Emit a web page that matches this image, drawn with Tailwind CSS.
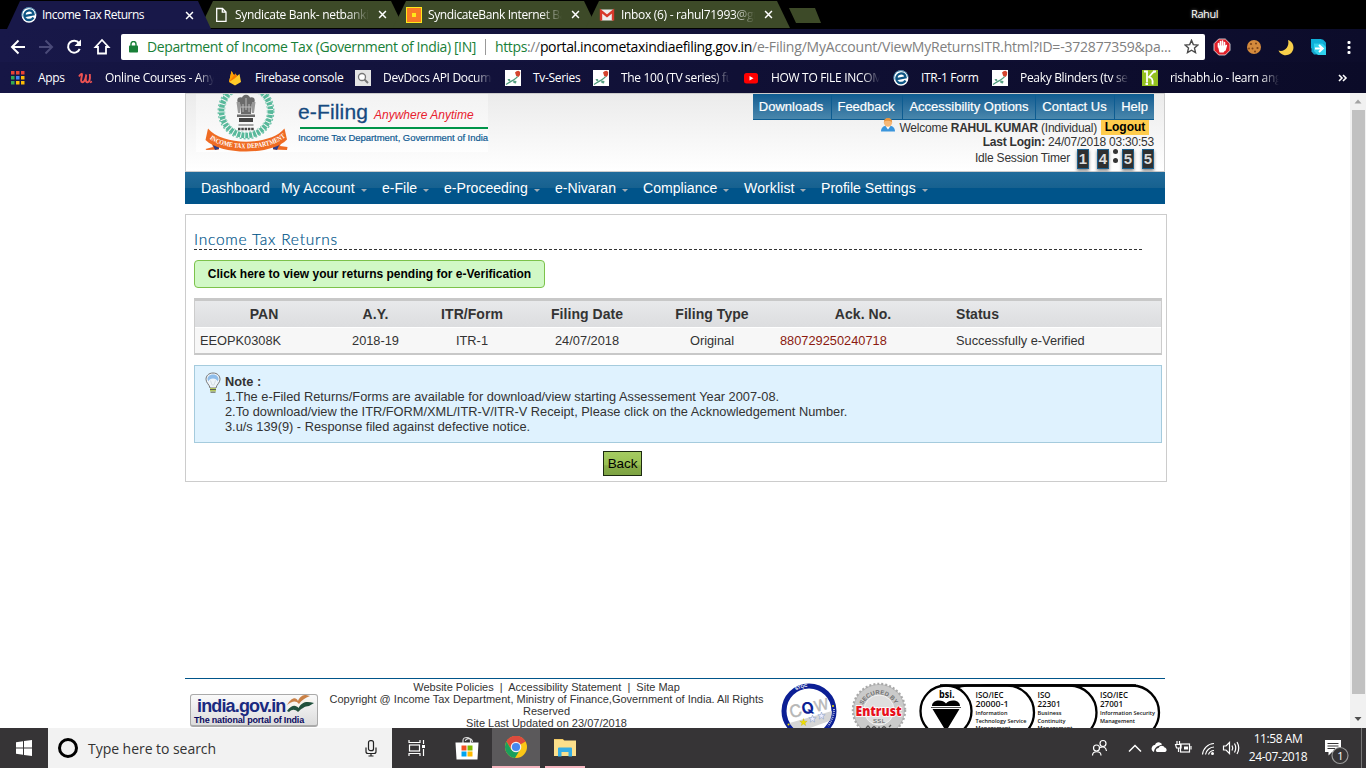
<!DOCTYPE html>
<html lang="en">
<head>
<meta charset="utf-8">
<title>Income Tax Returns</title>
<script src="https://cdn.jsdelivr.net/npm/@tailwindcss/browser@4"></script>
</head>
<body class="w-[1366px] h-[768px] overflow-hidden bg-white flex flex-col font-['Liberation_Sans',sans-serif] text-[#333]">

<svg class="hidden">
  <symbol id="e-logo" viewBox="0 0 16 16">
    <ellipse cx="8" cy="8" rx="7.4" ry="7.8" fill="#fff"/>
    <path d="M3.4 9.2L12.6 7.3C12.2 4.6 10.4 3.2 8 3.3C5.2 3.5 3.2 6 3.4 9C3.6 11.7 5.7 13.2 8.1 13C10.2 12.9 11.7 11.9 12.4 10.4" fill="none" stroke="#0d5584" stroke-width="2.3"/>
    <path d="M1 9.5C0 4 3.4.8 7.6.7C11 .7 14.5 2.6 15.2 7" fill="none" stroke="#2b6f9c" stroke-width="1"/>
  </symbol>
  <symbol id="rose" viewBox="0 0 16 16">
    <rect width="16" height="16" fill="#fff"/>
    <path d="M10 2.5L11.500 1.2L13.500 .8L15.200 2L15 5L13.500 7L11.200 6z" fill="#d4452f"/>
    <path d="M12.500 6.500C11.500 9 6 11 1 14.500" fill="none" stroke="#4d9a7a" stroke-width="1.200"/>
    <path d="M5.500 11.500L5 9L2.500 9L3.500 11zM8 10.500L11.500 11L11 13.500L8.500 13z" fill="#5aa284"/>
  </symbol>
  <symbol id="x" viewBox="0 0 10 10"><path d="M1.2 1.2L8.8 8.8M8.8 1.2L1.2 8.8" stroke="#fff" stroke-width="1.7"/></symbol>
</svg>

<!-- Tab strip -->
<div class="h-[29px] shrink-0 bg-black flex pl-[7px] pt-px font-['Open_Sans',sans-serif] text-[12px] text-white">
  <div class="relative z-10 w-[204px] h-7 bg-[#181849] [clip-path:polygon(13px_0,191px_0,204px_100%,0_100%)] flex items-center pl-[14px]">
    <svg class="w-4 h-4 shrink-0"><use href="#e-logo"/></svg>
    <span class="ml-[5px] w-[140px] whitespace-nowrap tracking-[-0.5px]">Income Tax Returns</span>
    <svg class="w-[9px] h-[9px] ml-[3px]"><use href="#x"/></svg>
  </div>
  <div class="-ml-[11px] w-[204px] h-[27px] bg-[#3d4a28] [clip-path:polygon(13px_0,191px_0,204px_100%,0_100%)] flex items-center pl-[15px]">
    <svg class="w-4 h-4 shrink-0" viewBox="0 0 16 16"><path d="M1.7 1.5H7.5L11 5V14.3H1.7zM7.3 1.5V5.2H11" fill="none" stroke="#fff" stroke-width="1.3"/></svg>
    <span class="ml-1 w-[134px] overflow-hidden whitespace-nowrap tracking-[-0.300px] [mask-image:linear-gradient(to_right,#000_84%,transparent)]">Syndicate Bank- netbankin</span>
    <svg class="w-[9px] h-[9px] ml-[9px]"><use href="#x"/></svg>
  </div>
  <div class="-ml-[11px] w-[204px] h-[27px] bg-[#3d4a28] [clip-path:polygon(13px_0,191px_0,204px_100%,0_100%)] flex items-center pl-[13px]">
    <svg class="w-4 h-4 shrink-0" viewBox="0 0 16 16"><rect x=".5" y=".5" width="15" height="15" fill="#f97a26" stroke="#ffe81a"/><rect x="6" y="6" width="4" height="4" fill="#ffe81a"/></svg>
    <span class="ml-[6px] w-[134px] overflow-hidden whitespace-nowrap tracking-[-0.38px] [mask-image:linear-gradient(to_right,#000_84%,transparent)]">SyndicateBank Internet Ban</span>
    <svg class="w-[9px] h-[9px] ml-[9px]"><use href="#x"/></svg>
  </div>
  <div class="-ml-[11px] w-[204px] h-[27px] bg-[#3d4a28] [clip-path:polygon(13px_0,191px_0,204px_100%,0_100%)] flex items-center pl-[13px]">
    <svg class="w-4 h-4 shrink-0" viewBox="0 0 16 16"><rect x="1.5" y="2.5" width="13" height="11" rx="1" fill="#eee"/><path d="M2 13.5V4L8 9L14 4V13.5" fill="none" stroke="#d8392b" stroke-width="2.4"/></svg>
    <span class="ml-[6px] w-[134px] overflow-hidden whitespace-nowrap tracking-[-0.31px] [mask-image:linear-gradient(to_right,#000_84%,transparent)]">Inbox (6) - rahul71993@gm</span>
    <svg class="w-[9px] h-[9px] ml-[9px]"><use href="#x"/></svg>
  </div>
  <div class="-ml-px mt-[7px] w-8 h-[15px] bg-[#3d4a28] [clip-path:polygon(0_0,26px_0,100%_100%,7px_100%)]"></div>
  <div class="ml-[370px] pt-[5px] text-[11px] tracking-[-0.4px] [text-shadow:0_0_3px_#888]">Rahul</div>
</div>

<!-- Toolbar -->
<div class="h-[33px] shrink-0 flex items-center bg-linear-to-r from-[#181849] to-[#0c0c2a] font-['Open_Sans',sans-serif] text-[14px]">
  <svg class="w-[121px] h-[33px] shrink-0" viewBox="0 0 121 33" fill="none" stroke="#fff" stroke-width="2">
    <path d="M25 18H12.5M18.5 11.5L12 18L18.5 24.5"/>
    <path d="M39 18H51.500M45.500 11.500L52 18L45.500 24.500" stroke="#4a4a78"/>
    <path d="M79 14.200A6 6 0 1 0 79.700 19.800"/><path d="M81 10.500V17H74.500z" fill="#fff" stroke="none"/>
    <path d="M95.500 18L102 11L108.500 18H106V24.500H98V18z" stroke-width="1.800"/>
  </svg>
  <div class="w-[1084px] h-[26px] mt-[2px] rounded-[2px] bg-white flex items-center shrink-0">
    <svg class="ml-[8px] w-[9px] h-3" viewBox="0 0 9 12"><rect y="4.500" width="9" height="7" rx=".8" fill="#188038"/><path d="M2 5V3A2.500 2.500 0 0 1 7 3V5" fill="none" stroke="#188038" stroke-width="1.400"/></svg>
    <span class="ml-[9px] w-[338px] whitespace-nowrap tracking-[-0.39px] text-[#188038]">Department of Income Tax (Government of India) [IN]</span>
    <span class="w-px h-4 bg-[#999]"></span>
    <span class="ml-[9px] w-[257px] whitespace-nowrap tracking-[-0.36px] text-black"><span class="text-[#188038]">https</span><span class="text-[#808080]">://</span>portal.incometaxindiaefiling.gov.in</span>
    <span class="w-[420px] whitespace-nowrap tracking-[-0.21px] text-[#808080]">/e-Filing/MyAccount/ViewMyReturnsITR.html?ID=-372877359&amp;pa...</span>
    <svg class="ml-[12px] w-[15px] h-[15px]" viewBox="0 0 15 15"><path d="M7.500 1.300L9.300 5.600L14 6L10.500 9.100L11.500 13.600L7.500 11.200L3.500 13.600L4.500 9.100L1 6L5.700 5.600z" fill="none" stroke="#4a4a4a" stroke-width="1.400"/></svg>
  </div>
  <svg class="w-[161px] h-[33px] shrink-0" viewBox="1205 29 161 33">
    <path d="M1218.700 39H1225.300L1230 43.700V50.300L1225.300 55H1218.700L1214 50.300V43.700z" fill="#e01e28" stroke="#eee" stroke-width=".8"/>
    <path d="M1218.500 47V43.500M1220.500 47V41.500M1222.500 47V41M1224.500 47V42.500M1226.300 45.500L1225 50" stroke="#fff" stroke-width="1.600" stroke-linecap="round"/><path d="M1217.800 45.500H1225.500L1225 50.500L1223.500 52.500H1219.500z" fill="#fff"/>
    <circle cx="1254" cy="47" r="7" fill="#d58a3c"/><g fill="#7c4318"><circle cx="1251" cy="44" r="1.100"/><circle cx="1256" cy="43.500" r="1"/><circle cx="1257.500" cy="48" r="1.100"/><circle cx="1252.500" cy="48.500" r="1"/><circle cx="1255" cy="51.500" r="1"/><circle cx="1249" cy="48.500" r=".9"/></g>
    <path d="M1288 40A7.800 7.800 0 1 1 1278.500 50.500C1284 52.500 1290 47 1288 40z" fill="#f8cf4a"/>
    <path d="M1311.500 39.500H1323L1326 42.500V54.500H1314L1311.500 51.500z" fill="#14a5cc"/><path d="M1311 39H1321L1325 43H1315V50L1311 48z" fill="#0fb0d8"/><path d="M1314 43.500H1322.500L1326 47V55H1318L1314 51z" fill="#2fd3ee"/><path d="M1315 48.500H1321.500M1319 45L1322.800 48.500L1319 52" fill="none" stroke="#fff" stroke-width="2"/>
    <g fill="#fff"><rect x="1347.500" y="41" width="3" height="3" rx="1"/><rect x="1347.500" y="46" width="3" height="3" rx="1"/><rect x="1347.500" y="51" width="3" height="3" rx="1"/></g>
  </svg>
</div>

<!-- Bookmarks bar -->
<div class="h-[31px] shrink-0 flex items-center pl-[10px] bg-linear-to-r from-[#161645] to-[#0b0b28] font-['Open_Sans',sans-serif] text-[12px] text-white whitespace-nowrap tracking-[-0.32px]">
  <div class="w-[67px] flex items-center gap-3"><svg class="w-4 h-4" viewBox="0 0 16 16"><g fill="#ea4335"><rect x="1" y="1" width="3.500" height="3.500"/><rect x="6" y="1" width="3.500" height="3.500"/><rect x="11" y="1" width="3.500" height="3.500"/></g><g><rect x="1" y="6" width="3.500" height="3.500" fill="#34a853"/><rect x="6" y="6" width="3.500" height="3.500" fill="#4285f4"/><rect x="11" y="6" width="3.500" height="3.500" fill="#fbbc05"/><rect x="1" y="11" width="3.500" height="3.500" fill="#34a853"/><rect x="6" y="11" width="3.500" height="3.500" fill="#fbbc05"/><rect x="11" y="11" width="3.500" height="3.500" fill="#fbbc05"/></g></svg><span>Apps</span></div>
  <div class="w-[150px] flex items-center gap-3"><svg class="w-4 h-4 shrink-0" viewBox="0 0 16 16"><path d="M2 6.500C3.500 4 5.300 2.800 5 5C4.700 7.500 3 12.300 5.300 12.300C7.500 12.300 8.800 8 9.300 4.500C8.600 8 8.300 12.700 10.500 12.300C12.800 11.800 13.300 8.500 12.800 4" fill="none" stroke="#ec5252" stroke-width="1.900"/><path d="M13 12.500L15 11.500" stroke="#ec5252" stroke-width="1.500"/></svg><span class="w-[109px] overflow-hidden [mask-image:linear-gradient(to_right,#000_84%,transparent)]">Online Courses - Anyti</span></div>
  <div class="w-[128px] flex items-center gap-3"><svg class="w-4 h-4" viewBox="0 0 16 16"><path d="M2 12L4.500 1L7 5.500L8.500 3.500L10 6L12.500 4L14 12L8 15.500z" fill="#ffca28"/><path d="M2 12L4.500 1L8.500 8z" fill="#ffa000"/><path d="M2 12L8.500 3.500L10.200 6.500z" fill="#f57c00"/></svg><span>Firebase console</span></div>
  <div class="w-[150px] flex items-center gap-3"><svg class="w-4 h-4 shrink-0" viewBox="0 0 16 16"><rect width="16" height="16" fill="#e4e4e4"/><circle cx="7" cy="7" r="3.500" fill="#fff" stroke="#777" stroke-width="1.300"/><path d="M9.500 9.500L13 13" stroke="#777" stroke-width="2"/></svg><span class="w-[109px] overflow-hidden [mask-image:linear-gradient(to_right,#000_84%,transparent)]">DevDocs API Docume</span></div>
  <div class="w-[88px] flex items-center gap-3"><svg class="w-4 h-4"><use href="#rose"/></svg><span>Tv-Series</span></div>
  <div class="w-[150px] flex items-center gap-3"><svg class="w-4 h-4 shrink-0"><use href="#rose"/></svg><span class="w-[109px] overflow-hidden [mask-image:linear-gradient(to_right,#000_84%,transparent)]">The 100 (TV series) full</span></div>
  <div class="w-[150px] flex items-center gap-3"><svg class="w-4 h-4 shrink-0" viewBox="0 0 16 16"><rect x="1" y="3" width="14" height="10.500" rx="2.500" fill="#f00"/><path d="M6.500 6V10.500L10.500 8.200z" fill="#fff"/></svg><span class="w-[109px] overflow-hidden [mask-image:linear-gradient(to_right,#000_84%,transparent)]">HOW TO FILE INCOME</span></div>
  <div class="w-[99px] flex items-center gap-3"><svg class="w-4 h-4"><use href="#e-logo"/></svg><span>ITR-1 Form</span></div>
  <div class="w-[150px] flex items-center gap-3"><svg class="w-4 h-4 shrink-0"><use href="#rose"/></svg><span class="w-[109px] overflow-hidden [mask-image:linear-gradient(to_right,#000_84%,transparent)]">Peaky Blinders (tv serie</span></div>
  <div class="w-[195px] flex items-center gap-3"><svg class="w-4 h-4 shrink-0" viewBox="0 0 16 16"><rect width="16" height="16" fill="#94c11f"/><path d="M2 1.500H5V12.500M3.500 14H6M13 1.500C10 2 9 5.500 6.500 7.500C9 7 11.500 9 10.500 14.500M11 1.500H14" fill="none" stroke="#fff" stroke-width="1.800"/></svg><span class="w-[109px] overflow-hidden [mask-image:linear-gradient(to_right,#000_84%,transparent)]">rishabh.io - learn angul</span></div>
  <svg class="w-[10px] h-[8px] ml-px" viewBox="0 0 10 8"><path d="M1 1L4 4L1 7M5 1L8 4L5 7" fill="none" stroke="#fff" stroke-width="1.600"/></svg>
</div>

<!-- Page viewport -->
<div class="h-[635px] shrink-0 flex overflow-hidden">
<div class="w-[1350px] pl-[185px] flex flex-col">

  <!-- Site header -->
  <header class="w-[980px] h-[79px] shrink-0 border border-[#ccc] bg-linear-to-b from-[#ebebeb] to-white flex justify-between">
    <div class="w-[292px] h-[58px] ml-[10px] bg-linear-to-b from-[#f3f3f3] to-white/80 flex">
      <svg class="w-[102px] h-[60px] shrink-0 overflow-hidden" viewBox="196 94 102 60">
        <circle cx="246" cy="111" r="24.500" fill="none" stroke="#58b99b" stroke-width="5.500" stroke-dasharray="3 1"/>
        <circle cx="246" cy="111" r="27.800" fill="none" stroke="#6cc3a9" stroke-width="1.300" stroke-dasharray="2 2"/>
        <circle cx="246" cy="111" r="21.300" fill="none" stroke="#8fd2bd" stroke-width="1" stroke-dasharray="2 2"/>
        <g fill="#6b6b6b"><circle cx="246" cy="99" r="4.300"/><circle cx="240.500" cy="100.500" r="3.200"/><circle cx="251.500" cy="100.500" r="3.200"/><path d="M240 102H252L251 114H241z"/><path d="M236.500 102H240V113H238zM252 102H255.500L254 113H252z" fill="#999"/><rect x="237" y="114.500" width="18" height="2.500"/><rect x="239" y="118" width="14" height="4" fill="#444"/></g>
        <path d="M241 107H251M243 104V112M249 104V112M246 98V110" stroke="#bbb" stroke-width="1"/>
        <path d="M238.500 125H253.500" stroke="#555" stroke-width="1"/><path d="M238 129H254" stroke="#444" stroke-width="2.500" stroke-dasharray="2.500 .8"/>
        <path d="M205.500 149L213 147L208 134L217 139L219 149.500L206.500 150zM287.500 147L280 146L284.500 133.500L275 139L273 149.500L287 150z" fill="#ef6b23"/>
        <path d="M209 136L215 150L219 149V143zM283.500 136L277 150L273 149V143z" fill="#2c3c88"/>
        <path d="M208 128.500C222 146 270 146 284.500 128.500L287 139.500C272 155.500 221 155.500 205.500 140z" fill="#ef6b23"/>
        <path id="ribbon" d="M208 137.500C224 152 269 152 286 136.500" fill="none"/>
        <text font-family="Liberation Serif" font-weight="700" font-size="7" fill="#fff"><textPath href="#ribbon" textLength="80" lengthAdjust="spacingAndGlyphs" startOffset="2">INCOME TAX DEPARTMENT</textPath></text>
      </svg>
      <div class="w-[190px] pt-[7px] flex flex-col">
        <div class="h-[26px] flex items-baseline whitespace-nowrap"><span class="text-[21px] leading-[22px] w-[76px] tracking-[0.150px] text-[#164a80] [-webkit-text-stroke:0.3px_#164a80]">e-Filing</span><span class="text-[12px] italic text-[#e8202e]">Anywhere Anytime</span></div>
        <div class="ml-[2px] w-[188px] h-[2px] bg-[#00954a]"></div>
        <div class="mt-[2px] text-[9.500px] leading-[14px] tracking-[-0.050px] text-[#0f5a92] whitespace-nowrap [-webkit-text-stroke:0.2px_#0f5a92]">Income Tax Department, Government of India</div>
      </div>
    </div>
    <div class="w-[401px] mr-[10px] flex flex-col items-end whitespace-nowrap">
      <div class="w-[401px] h-[26px] shrink-0 flex text-[13px] text-white text-center leading-[26px] border-b border-[#0d5c91] bg-linear-to-b from-[#0d5c91] to-[#4987ac] [-webkit-text-stroke:0.2px_#fff]">
        <span class="w-[79px] pr-[2px] border-r border-[#0d5c91]">Downloads</span><span class="w-[71px] pr-[2px] border-r border-[#0d5c91]">Feedback</span><span class="w-[133px] border-r border-[#0d5c91]">Accessibility Options</span><span class="w-[79px] pr-px border-r border-[#0d5c91]">Contact Us</span><span class="w-[39px]">Help</span>
      </div>
      <div class="h-[15px] flex items-center text-[12px] leading-[15px] mr-[5px]">
        <svg class="w-[14px] h-[14px] -mt-[5px] mr-[4px]" viewBox="0 0 14 14"><path d="M0 13.500C0 10 2 8 5 8H9C12 8 14 10 14 13.500z" fill="#3a95dc"/><path d="M4.500 8L7 11.500L9.500 8z" fill="#fff"/><circle cx="7" cy="4.500" r="4.200" fill="#f6b878"/><path d="M3 4C3 1 5 0 7 0S11 1 11 4C9 3 5 2 3 4z" fill="#e8923a"/></svg>
        <span class="pt-px tracking-[-0.230px]">Welcome <b>RAHUL KUMAR</b> (Individual)</span>
        <b class="ml-1 w-[48px] text-center bg-[#ffcc4d] text-black text-[12px] leading-[15px]">Logout</b>
      </div>
      <div class="text-[12px] leading-[14px] tracking-[-0.220px]"><b>Last Login:</b> 24/07/2018 03:30:53</div>
      <div class="flex h-[22px]">
        <span class="text-[12px] leading-[19px] tracking-[-0.2px] mr-[7px]">Idle Session Timer</span>
        <div class="flex text-[15px] leading-[19px] font-bold text-[#ddd] text-center">
          <span class="w-3 h-5 bg-[#2f2f2f] border border-[#1c5f8c] shadow-[0_2px_3px_#888] leading-[18px]">1</span>
          <span class="ml-[8px] w-3 h-5 bg-[#2f2f2f] border border-[#1c5f8c] shadow-[0_2px_3px_#888] leading-[18px]">4</span>
          <span class="w-[13px] flex flex-col items-center gap-[4px]"><i class="w-[5px] h-[5px] rounded-full bg-[#333]"></i><i class="w-[5px] h-[5px] rounded-full bg-[#333]"></i></span>
          <span class="w-3 h-5 bg-[#2f2f2f] border border-[#1c5f8c] shadow-[0_2px_3px_#888] leading-[18px]">5</span>
          <span class="ml-[8px] w-3 h-5 bg-[#2f2f2f] border border-[#1c5f8c] shadow-[0_2px_3px_#888] leading-[18px]">5</span>
        </div>
      </div>
    </div>
  </header>

  <!-- Main navigation -->
  <nav class="w-[980px] h-8 shrink-0 pl-4 flex text-white text-[14.080px] leading-[32px] whitespace-nowrap bg-[linear-gradient(#206b9b,#17618f_50%,#00548a_50%,#00548a)]">
    <span class="w-[80px]">Dashboard</span>
    <span class="w-[101px] flex items-center"><span class="w-[80px] tracking-[0.1px]">My Account</span><i class="mt-1 border-x-3 border-t-3 border-x-transparent border-t-[#a3adb5]"></i></span>
    <span class="w-[62px] flex items-center"><span class="w-[41px]">e-File</span><i class="mt-1 border-x-3 border-t-3 border-x-transparent border-t-[#a3adb5]"></i></span>
    <span class="w-[111px] flex items-center"><span class="w-[90px]">e-Proceeding</span><i class="mt-1 border-x-3 border-t-3 border-x-transparent border-t-[#a3adb5]"></i></span>
    <span class="w-[88px] flex items-center"><span class="w-[67px]">e-Nivaran</span><i class="mt-1 border-x-3 border-t-3 border-x-transparent border-t-[#a3adb5]"></i></span>
    <span class="w-[101px] flex items-center"><span class="w-[80px]">Compliance</span><i class="mt-1 border-x-3 border-t-3 border-x-transparent border-t-[#a3adb5]"></i></span>
    <span class="w-[77px] flex items-center"><span class="w-[56px] tracking-[0.1px]">Worklist</span><i class="mt-1 border-x-3 border-t-3 border-x-transparent border-t-[#a3adb5]"></i></span>
    <span class="flex items-center"><span class="w-[101px]">Profile Settings</span><i class="mt-1 border-x-3 border-t-3 border-x-transparent border-t-[#a3adb5]"></i></span>
  </nav>

  <!-- Main panel -->
  <main class="mt-[10px] w-[982px] h-[268px] shrink-0 border border-[#ccc] pl-[8px] pt-[17px] text-[12.800px]">
    <h1 class="w-[948px] h-[18px] border-b border-dashed border-[#333] font-['Lato','Open_Sans',sans-serif] font-light text-[15.500px] leading-[15px] tracking-[0.770px] text-[#00558a] [-webkit-text-stroke:0.2px_#00558a]">Income Tax Returns</h1>
    <div class="mt-[10px] w-[351px] h-[28px] rounded-[4px] border border-[#7cc24b] bg-[#d1f8c6] text-center leading-[26px] text-[12px] font-bold text-black">Click here to view your returns pending for e-Verification</div>

    <table class="mt-[10px] w-[968px] h-[57px] table-fixed border-separate border-spacing-0 border-x border-t-3 border-b-2 border-x-[#ccc] border-y-[#c8c8c8]">
      <colgroup><col class="w-[138px]"><col class="w-[85px]"><col class="w-[108px]"><col class="w-[122px]"><col class="w-[128px]"><col class="w-[174px]"><col></colgroup>
      <tr class="h-[26px] bg-linear-to-b from-[#e8e9eb] to-[#dcdddf] text-[14px] tracking-[0.040px] leading-[20px]">
        <th class="p-0">PAN</th><th class="p-0">A.Y.</th><th class="p-0">ITR/Form</th><th class="p-0">Filing Date</th><th class="p-0">Filing Type</th><th class="p-0">Ack. No.</th><th class="p-0 pl-[6px] text-left">Status</th>
      </tr>
      <tr class="h-[26px] bg-[#f7f7f7] text-center">
        <td class="p-0 pl-[5px] text-left border-t border-white">EEOPK0308K</td><td class="p-0 border-t border-white">2018-19</td><td class="p-0 border-t border-white">ITR-1</td><td class="p-0 border-t border-white">24/07/2018</td><td class="p-0 border-t border-white">Original</td><td class="p-0 pl-1 text-left border-t border-white text-[#8b1a10]">880729250240718</td><td class="p-0 pl-[6px] text-left border-t border-white">Successfully e-Verified</td>
      </tr>
    </table>

    <div class="mt-[10px] w-[968px] h-[78px] border border-[#a5cbdd] bg-[#dff2fe] flex pl-[9px] pt-[6px]">
      <svg class="w-[18px] h-[22px] shrink-0" viewBox="0 0 18 22"><path d="M9 1C4.500 1 2 4 2 7.300C2 11 5.500 12.500 6 16H12C12.500 12.500 16 11 16 7.300C16 4 13.500 1 9 1z" fill="#eef4f9" stroke="#777" stroke-width="1"/><path d="M9 2.500C5.500 2.500 3.500 4.800 3.500 7.300L4.500 9.500C5 5.500 13 5.500 13.500 9.500L14.500 7.300C14.500 4.800 12.500 2.500 9 2.500z" fill="#8fbdea"/><path d="M6.500 8.500L8 13H10L11.500 8.500" fill="none" stroke="#d5dde3"/><rect x="6" y="16" width="6" height="3.500" fill="#b6c860"/><path d="M6 17.500H12M6.500 20.200H11.500" stroke="#5a5f50"/></svg>
      <div class="ml-[3px] pt-[2px] leading-[15px] whitespace-nowrap"><b>Note :</b><br>1.The e-Filed Returns/Forms are available for download/view starting Assessement Year 2007-08.<br>2.To download/view the ITR/FORM/XML/ITR-V/ITR-V Receipt, Please click on the Acknowledgement Number.<br>3.u/s 139(9) - Response filed against defective notice.</div>
    </div>
    <button class="block mt-[8px] ml-[409px] w-[39px] h-[25px] border border-[#1c2a10] bg-[linear-gradient(#a5cc62,#98c052_55%,#88ad48_60%,#7da343)] text-[13.500px] tracking-[-0.100px] leading-[23px] text-black">Back</button>
  </main>

  <!-- Footer -->
  <footer class="mt-[196px] w-[980px] h-[50px] shrink-0 border-t border-[#00558a] flex overflow-hidden">
    <div class="mt-[15px] ml-[5px] w-[128px] h-[33px] shrink-0 rounded-[3px] border border-[#aaa] border-b-2 bg-linear-to-b from-[#fafafa] to-[#dcdcdc] pl-[3px] font-bold text-[#1a2a80] whitespace-nowrap">
      <div class="flex h-[20px]"><span class="pl-[3px] w-[91px] text-[18px] leading-[22px] tracking-[-0.850px]">india.gov.in</span>
        <svg class="w-[30px] h-[18px]" viewBox="0 0 28 18"><path d="M1 10C6 2 10 2 12 6C14 1 17 0 20 0L24 1C19 3 16 5 13 9C10 5 6 6 1 10z" fill="#c98046"/><path d="M1 13C6 6 10 6 13 10C16 5 20 3 27 5L23 8C19 7 16 10 13 14C10 11 7 10 2 14z" fill="#f8f4ec"/><path d="M1 16C6 9 10 10 12.500 13C16 7 20 6 28 8L23 11C19 11 15 14 12 17C9 14 6 14 3 17z" fill="#20503c"/></svg></div>
      <div class="text-[9px] leading-[11px] tracking-[-0.180px] text-[#0a0a60]">The national portal of India</div>
    </div>
    <div class="ml-[7px] w-[443px] shrink-0 pt-[2px] text-center text-[11px] leading-[12px] whitespace-pre-line">Website Policies &nbsp;|&nbsp; Accessibility Statement &nbsp;|&nbsp; Site Map
      Copyright @ Income Tax Department, Ministry of Finance,Government of India. All Rights
      Reserved
      Site Last Updated on 23/07/2018</div>
    <svg class="ml-[12px] w-[384px] h-[49px] shrink-0" viewBox="780 679 384 49" font-family="Liberation Sans">
      <clipPath id="disc"><circle cx="809" cy="711" r="23"/></clipPath>
      <circle cx="809" cy="711" r="25" fill="#fff" stroke="#0c1f95" stroke-width="5"/>
      <g clip-path="url(#disc)"><path d="M786 724L832 711V720L788 736z" fill="#d6d6d6"/></g>
      <g transform="rotate(-14 809 709)" font-family="Inter" font-size="17" text-anchor="middle"><text x="795.500" y="713.500" fill="#b5b5b5" stroke="#b5b5b5" stroke-width=".4">C</text><text x="808" y="713.500" fill="#0c1f95" font-weight="700" font-size="16">Q</text><text x="822" y="713.500" font-size="15" fill="#b8b8b8" stroke="#b8b8b8" stroke-width=".4">W</text></g>
      <path id="star" d="M803.500 718.500L804.400 721.200H807.200L805 722.900L805.800 725.600L803.500 724L801.200 725.600L802 722.900L799.800 721.200H802.600z" fill="#f0e000" stroke="#b8a800" stroke-width=".3"/>
      <g fill="#eef" stroke="#8fa4cc" stroke-width=".6"><path transform="translate(9 -3.500)" d="M803.500 718.500L804.400 721.200H807.200L805 722.900L805.800 725.600L803.500 724L801.200 725.600L802 722.900L799.800 721.200H802.600z"/><path transform="translate(18 -6.500)" d="M803.500 718.500L804.400 721.200H807.200L805 722.900L805.800 725.600L803.500 724L801.200 725.600L802 722.900L799.800 721.200H802.600z"/></g>
      <path id="stqc" d="M785.500 706A24 24 0 0 1 832.500 706" fill="none"/>
      <text font-size="4.500" font-weight="700" fill="#fff"><textPath href="#stqc" startOffset="19" textLength="12">STQC</textPath></text>
      <g fill="#f0e000"><circle cx="833" cy="706" r="1"/><circle cx="788.500" cy="724.500" r="1"/></g>
      <path d="M834 709C834 714 832.500 720 828 726" fill="none" stroke="#aeb8e0" stroke-width="2" stroke-dasharray="1 1"/>

      <circle cx="879" cy="710" r="26" fill="#bcbcbc" stroke="#a9a9a9" stroke-width="2.500" stroke-dasharray="2 2"/>
      <circle cx="879" cy="710" r="25" fill="#cacaca"/><circle cx="879" cy="710" r="15" fill="#dedede" stroke="#f2f2f2"/>
      <path id="sec" d="M862.500 706A17.500 17.500 0 0 1 895.500 706" fill="none"/>
      <text font-size="6" font-weight="700" fill="#707070"><textPath href="#sec" startOffset="1" textLength="40">SECURED BY</textPath></text>
      <text x="855.500" y="716" font-family="Open Sans" font-size="14" font-weight="800" fill="#e8101c" stroke="#fff" stroke-width="1.600" paint-order="stroke" textLength="46" lengthAdjust="spacingAndGlyphs">Entrust</text>
      <text x="879" y="722.500" font-size="6" text-anchor="middle" fill="#555" textLength="12">SSL</text>
      <path d="M866 728L868 726L870 728M872 728L874 726.500L876 728M879 726.500V728M882 728L884 726.500L886 728M889 727L891 725" fill="none" stroke="#555" stroke-width="1.300"/>

      <g fill="#fff" stroke="#000" stroke-width="2.300"><rect x="1000" y="685.500" width="159" height="54" rx="27"/><rect x="960" y="685.500" width="136.500" height="54" rx="27"/><rect x="940" y="685.500" width="94" height="54" rx="27"/><ellipse cx="946" cy="711" rx="25.500" ry="25.500"/></g>
      <path d="M940 685.500H1136" stroke="#000" stroke-width="2.300"/>
      <text x="939" y="698" font-family="Open Sans" font-weight="700" font-size="11" fill="#000" textLength="15.500" lengthAdjust="spacingAndGlyphs">bsi.</text>
      <path d="M932 706C932 699 943 699 946 703.500C949 699 960 699 960 706zM932.500 709H959.500L948 728H944z" fill="#000"/>
      <path d="M931 707.500H961" stroke="#000" stroke-width=".7"/>
      <g font-family="Open Sans" font-weight="600" font-size="8" fill="#111"><text x="975.500" y="698" textLength="28" lengthAdjust="spacingAndGlyphs">ISO/IEC</text><text x="975.500" y="707.300" textLength="33" lengthAdjust="spacingAndGlyphs">20000-1</text><text x="1037.500" y="698" textLength="13" lengthAdjust="spacingAndGlyphs">ISO</text><text x="1037.500" y="707.300" textLength="23" lengthAdjust="spacingAndGlyphs">22301</text><text x="1100" y="698" textLength="28" lengthAdjust="spacingAndGlyphs">ISO/IEC</text><text x="1100" y="707.300" textLength="23" lengthAdjust="spacingAndGlyphs">27001</text></g>
      <g font-family="Open Sans" font-weight="600" font-size="5.800" fill="#111"><text x="975.500" y="715.300" textLength="32" lengthAdjust="spacingAndGlyphs">Information</text><text x="975.500" y="722.800" textLength="51" lengthAdjust="spacingAndGlyphs">Technology Service</text><text x="975.500" y="729.500" textLength="35" lengthAdjust="spacingAndGlyphs">Management</text><text x="1037.500" y="715.300" textLength="24" lengthAdjust="spacingAndGlyphs">Business</text><text x="1037.500" y="722.800" textLength="28" lengthAdjust="spacingAndGlyphs">Continuity</text><text x="1037.500" y="729.500" textLength="35" lengthAdjust="spacingAndGlyphs">Management</text><text x="1100" y="715.300" textLength="55" lengthAdjust="spacingAndGlyphs">Information Security</text><text x="1100" y="722.800" textLength="35" lengthAdjust="spacingAndGlyphs">Management</text></g>
    </svg>
  </footer>
</div>

<!-- Scrollbar -->
<div class="w-4 flex flex-col items-center bg-[#f1f1f1]">
  <svg class="w-4 h-[17px]" viewBox="0 0 16 17"><path d="M4.500 10.500L8 6.500L11.500 10.500z" fill="#a3a3a3"/></svg>
  <div class="w-[13px] h-[584px] bg-[#c1c1c1]"></div>
  <svg class="w-4 h-[34px]" viewBox="0 0 16 34"><path d="M4.500 23L8 27L11.500 23z" fill="#505050"/></svg>
</div>
</div>

<!-- Taskbar -->
<div class="h-10 shrink-0 bg-[#363436] flex items-center font-['Open_Sans',sans-serif] text-white">
  <div class="w-12 flex justify-center"><svg class="w-4 h-4" viewBox="0 0 16 16" fill="#fff"><path d="M0 2.300L7 1.300V7.500H0zM8 1.100L16 0V7.500H8zM0 8.500H7V14.700L0 13.700zM8 8.500H16V16L8 14.900z"/></svg></div>
  <div class="w-[344px] h-10 bg-[#f2f2f2] flex items-center text-[#333]">
    <span class="ml-[10px] w-[20px] h-[20px] rounded-full border-3 border-black"></span>
    <span class="ml-[10px] w-[277px] text-[14px] tracking-[-0.040px]">Type here to search</span>
    <svg class="w-[12px] h-[17px]" viewBox="0 0 12 17" fill="none" stroke="#222" stroke-width="1.200"><rect x="3.500" y=".7" width="5" height="10" rx="2"/><path d="M1 7.500V11.500C1 12.800 2 13.500 3 13.500H9C10 13.500 11 12.800 11 11.500V7.500M6 13.500V16M3.500 16H8.500"/></svg>
  </div>
  <div class="w-[49px] flex justify-center"><svg class="w-[18px] h-[16px]" viewBox="0 0 18 16" fill="none" stroke="#fff" stroke-width="1.200"><path d="M1 0V2.500H12V0M1 16V13.500H12V16M15.500 0V4M15.500 9V16"/><rect x="1.500" y="5" width="10" height="6"/><path d="M14 5H17V8H14z" fill="#fff" stroke="none"/></svg></div>
  <div class="w-[51px] flex justify-center"><svg class="w-[24px] h-[24px]" viewBox="0 0 24 24"><path d="M8 7V4.500C8 .5 15.500 .5 15.500 4.500V7M10.500 5C10.500 2 17 1.500 17.500 6" fill="none" stroke="#ddd" stroke-width="1.200"/><path d="M.5 6.500H23.500L22.500 23.500H1.500z" fill="#fff"/><path d="M6.500 9.500H11.500V14.500H6.500z" fill="#f25022"/><path d="M12.500 9.500H17.500V14.500H12.500z" fill="#7fba00"/><path d="M6.500 15.500H11.500V20.500H6.500z" fill="#00a4ef"/><path d="M12.500 15.500H17.500V20.500H12.500z" fill="#ffb900"/></svg></div>
  <div class="w-12 h-10 bg-[#5b595b] border-b-2 border-[#f5b5bf] flex justify-center items-center"><svg class="w-[22px] h-[22px]" viewBox="0 0 22 22"><circle cx="11" cy="11" r="11" fill="#fbc616"/><path d="M11 11L1.500 5.500A11 11 0 0 1 20.500 5.500z" fill="#dd4b3e"/><path d="M11 5.500H20.500A11 11 0 0 0 1.500 5.500L6.300 13.500z" fill="#dd4b3e"/><path d="M1.500 5.500A11 11 0 0 0 10 22L15 13.800L11 16L6.300 13.700z" fill="#1a9f5c"/><circle cx="11" cy="11" r="5.300" fill="#f1f1f1"/><circle cx="11" cy="11" r="4.100" fill="#4688f1"/></svg></div>
  <div class="ml-[5px] w-10 h-10 border-b-2 border-[#f5b5bf] flex justify-center items-center"><svg class="w-[22px] h-[19px]" viewBox="0 0 22 19"><path d="M0 1H9L10.500 3H0z" fill="#e8b33c"/><path d="M0 1.500H8.500L10 2.500H22V18H0z" fill="#fbdf8b"/><path d="M4 10.500Q4 9.500 5 9.500H17Q18 9.500 18 10.500V18.500H14.500V14H7.500V18.500H4z" fill="#35ade4"/></svg></div>
  <svg class="ml-[500px] w-[160px] h-10 shrink-0" viewBox="1085 728 160 40" fill="none" stroke="#fff" stroke-width="1.200">
    <circle cx="1103" cy="743.500" r="3"/><path d="M1100 747.500C1104 745.500 1106 748 1106.500 751"/><circle cx="1096.500" cy="748" r="3"/><path d="M1092.500 755.500C1092.500 750.500 1101 750.500 1101 755.500"/>
    <path d="M1129 751.500L1135 745.500L1141 751.500" stroke-width="1.500"/>
    <path d="M1154 752A3.500 3.500 0 0 1 1152 747C1153 745 1154.500 745 1155 745C1156 741 1161 741.500 1162 744.500L1157 746.500C1155 748 1154 750 1154 752zM1157 752C1155 751 1156 748 1158.500 748C1160 744.500 1164 745.500 1164.500 747.500C1167.500 748 1167 752 1165 752z" fill="#fff" stroke="none"/>
    <rect x="1180.500" y="744" width="9" height="8"/><path d="M1184 746.500H1188V749.500H1184z" fill="#fff" stroke="none"/><path d="M1191 746V749.500M1177 741V744M1179.500 741V744M1175.500 744.500H1181V748H1176.500zM1178.500 748V752"/>
    <path d="M1202.500 754.500A12 12 0 0 1 1214 743.500M1205.500 754.500A9 9 0 0 1 1214 747M1208.500 754.500A6 6 0 0 1 1214 750.500" /><circle cx="1212.500" cy="753.500" r="1.500" fill="#fff" stroke="none"/>
    <path d="M1223.500 746H1226L1229.500 742.500V753.500L1226 750H1223.500zM1232 745.500Q1233.500 748 1232 750.500M1234.500 743.500Q1237 748 1234.500 752.500M1237 742Q1240.500 748 1237 754"/>
  </svg>
  <div class="w-[66px] text-center text-[12px] leading-[18px] tracking-[-0.420px]">11:58 AM<br>24-07-2018</div>
  <svg class="w-[55px] h-10 shrink-0" viewBox="1311 728 55 40"><path d="M1325 740H1341V752H1332L1328.500 755.500V752H1325z" fill="#fff"/><path d="M1327.500 743.500H1338.500M1327.500 746H1338.500M1327.500 748.500H1335" stroke="#363436"/><circle cx="1340" cy="755.500" r="8" fill="#363436" stroke="#999" stroke-width="1.200"/><text x="1340.500" y="759.500" font-size="11" text-anchor="middle" fill="#fff">1</text><path d="M1361.500 728V768" stroke="#777"/></svg>
</div>
</body>
</html>
